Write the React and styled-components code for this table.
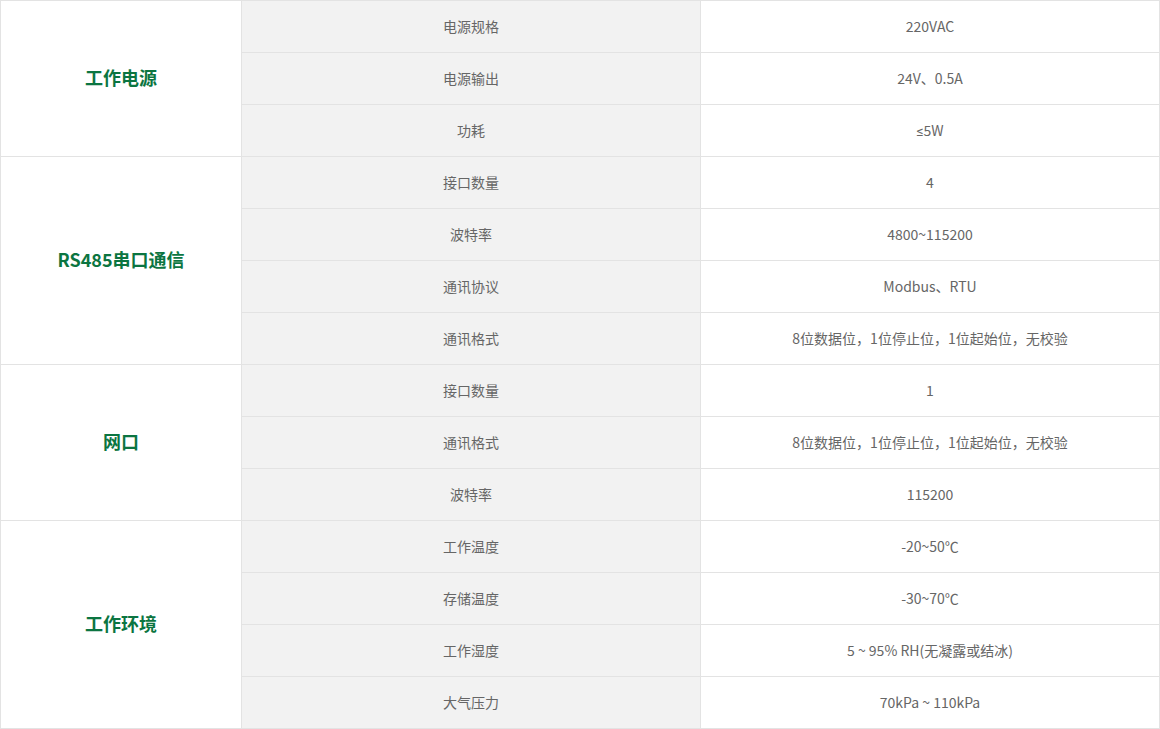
import React from "react";
import styled, { createGlobalStyle } from "styled-components";

const Global = createGlobalStyle`
  html, body { margin: 0; padding: 0; background: #fff; }
  body { font-family: "Noto Sans CJK SC", "Noto Sans", sans-serif; }
`;

const Table = styled.table`
  width: 1160px;
  border-collapse: collapse;
  table-layout: fixed;
  border: 1px solid #e3e3e3;
`;

const Group = styled.td`
  width: 240px;
  border: 1px solid #e3e3e3;
  text-align: center;
  vertical-align: middle;
  color: #0b7541;
  font-size: 18px;
  font-weight: 700;
  background: #fff;
  padding: 0 0 4px;
`;

const Name = styled.td`
  width: 459px;
  height: 52px;
  border: 1px solid #e3e3e3;
  background: #f2f2f2;
  text-align: center;
  color: #666;
  font-size: 14px;
  padding: 0 0 2px;
  box-sizing: border-box;
`;

const Value = styled.td`
  border: 1px solid #e3e3e3;
  background: #fff;
  text-align: center;
  color: #666;
  font-size: 14px;
  padding: 0 0 2px;
`;

const Sym = styled.span`
  font-family: "Roboto", "DejaVu Sans", sans-serif;
`;

const data = [
  ["工作电源", [["电源规格", "220VAC"], ["电源输出", "24V、0.5A"], ["功耗", <><Sym>≤</Sym>5W</>]]],
  ["RS485串口通信", [["接口数量", "4"], ["波特率", "4800~115200"], ["通讯协议", "Modbus、RTU"], ["通讯格式", "8位数据位，1位停止位，1位起始位，无校验"]]],
  ["网口", [["接口数量", "1"], ["通讯格式", "8位数据位，1位停止位，1位起始位，无校验"], ["波特率", "115200"]]],
  ["工作环境", [["工作温度", "-20~50℃"], ["存储温度", "-30~70℃"], ["工作湿度", "5 ~ 95% RH(无凝露或结冰)"], ["大气压力", "70kPa ~ 110kPa"]]],
];

export default function App() {
  return (
    <>
      <Global />
      <Table>
        <tbody>
          {data.map(([g, rows]) =>
            rows.map(([n, v], i) => (
              <tr key={g + n + i}>
                {i === 0 && <Group rowSpan={rows.length}>{g}</Group>}
                <Name>{n}</Name>
                <Value>{v}</Value>
              </tr>
            ))
          )}
        </tbody>
      </Table>
    </>
  );
}
